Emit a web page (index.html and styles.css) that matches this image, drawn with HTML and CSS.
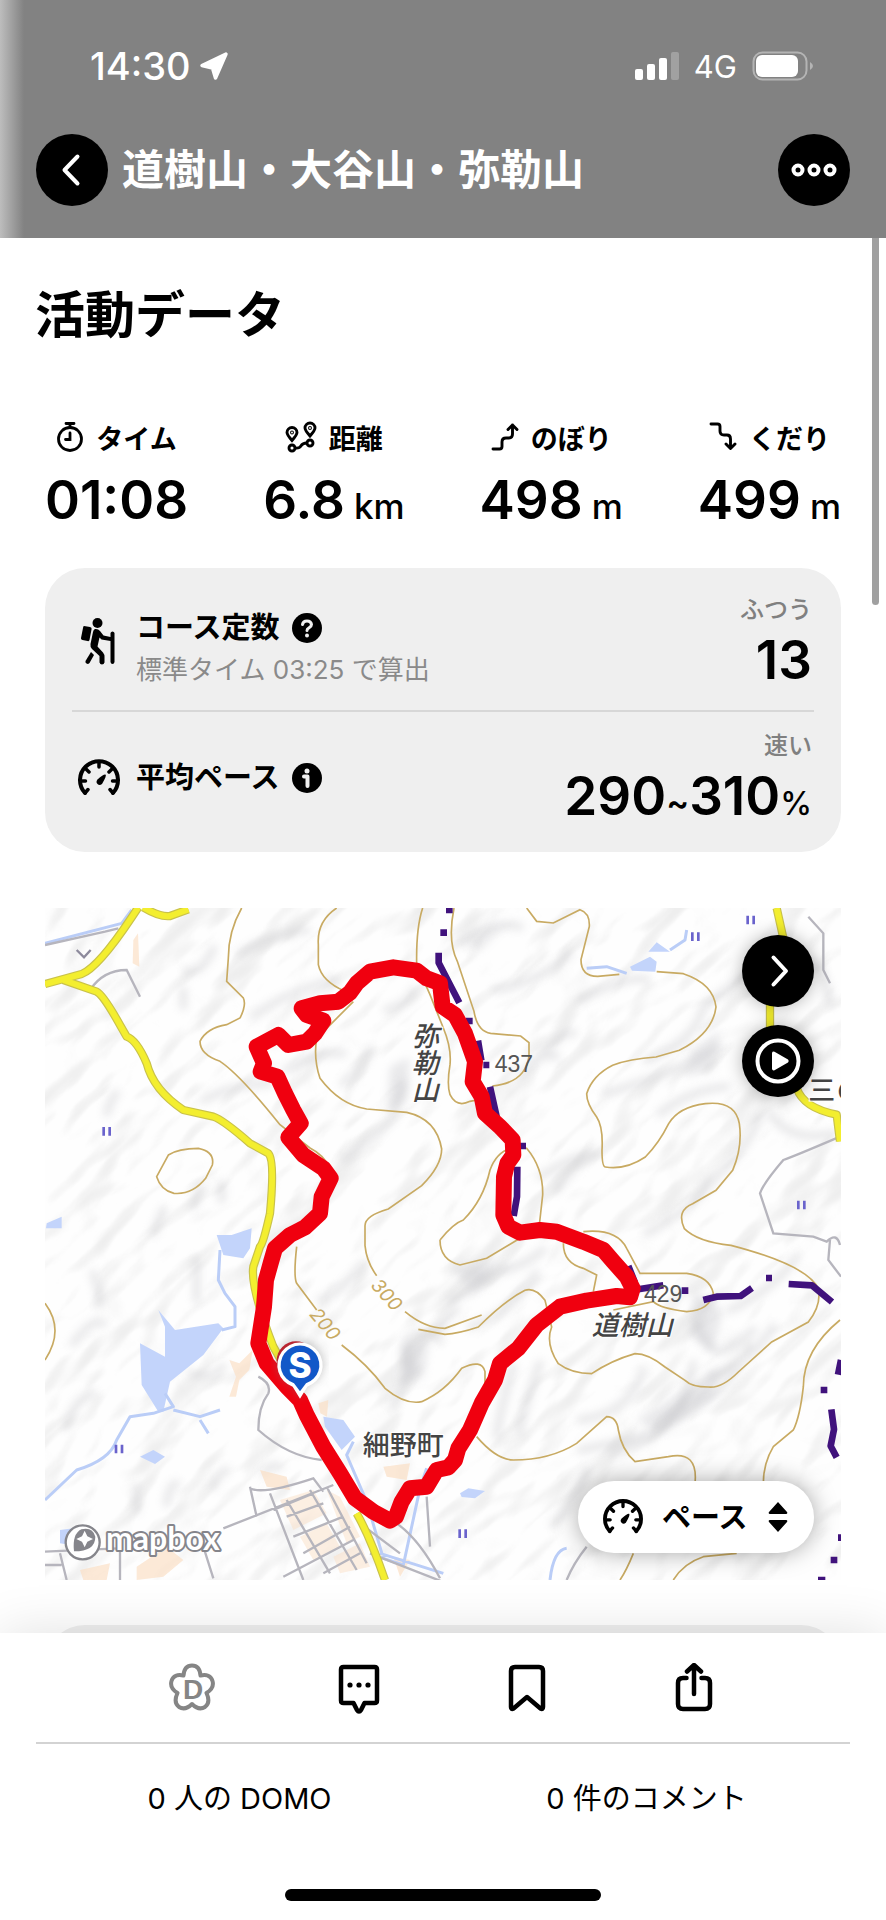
FILE: index.html
```html
<!DOCTYPE html>
<html lang="ja">
<head>
    <meta charset="UTF-8">
    <meta name="viewport" content="width=device-width, initial-scale=1.0">
    <title>道樹山・大谷山・弥勒山</title>
    <link rel="stylesheet" href="styles.css">
</head>
<body>
    <header class="header">
        <div class="status">
            <span class="status-time">14:30</span>
            <svg class="status-arrow" width="30" height="30" viewBox="0 0 30 30"><path d="M27 3 3 14.500 13.500 17 16.500 27z" fill="#fff" stroke="#fff" stroke-width="3.500" stroke-linejoin="round"/></svg>
            <div class="status-right">
                <svg width="44" height="28" viewBox="0 0 44 28" fill="#fff"><rect y="17" width="8" height="11" rx="2"/><rect x="12" y="12" width="8" height="16" rx="2"/><rect x="24" y="6" width="8" height="22" rx="2"/><rect x="36" width="8" height="28" rx="2" opacity=".25"/></svg>
                <span class="status-net">4G</span>
                <svg width="62" height="30" viewBox="0 0 62 30"><rect x="1.500" y="1.500" width="53" height="27" rx="9" fill="none" stroke="#b4b4b4" stroke-width="2"/><rect x="4" y="4" width="42" height="22" rx="6" fill="#fff"/><path d="M58 11q6 4 0 8z" fill="#b4b4b4"/></svg>
            </div>
        </div>
        <div class="nav">
            <button class="round" aria-label="戻る">
                <svg width="72" height="72" viewBox="0 0 72 72"><path d="M41.500 22.500 28.500 36l13 13.500" fill="none" stroke="#fff" stroke-width="4" stroke-linecap="round" stroke-linejoin="round"/></svg>
            </button>
            <h1>道樹山・大谷山・弥勒山</h1>
            <button class="round" aria-label="メニュー">
                <svg width="72" height="72" viewBox="0 0 72 72" fill="none" stroke="#fff" stroke-width="4"><circle cx="20" cy="36" r="4.500"/><circle cx="36" cy="36" r="4.500"/><circle cx="52" cy="36" r="4.500"/></svg>
            </button>
        </div>
    </header>

    <main class="content">
        <h2>活動データ</h2>

        <div class="stats">
            <div class="stat">
                <div class="stat-label">
                    <svg width="28" height="32" viewBox="0 0 28 32" fill="none" stroke="#000" stroke-width="2.800" stroke-linecap="round"><circle cx="14" cy="18" r="11.500"/><path d="M14 12v6.500H9.500M10 2.500h8M14 3v3"/></svg>
                    タイム
                </div>
                <div class="stat-value">01:08</div>
            </div>
            <div class="stat">
                <div class="stat-label">
                    <svg width="32" height="32" viewBox="0 0 32 32" fill="none" stroke="#000" stroke-width="2.900"><path d="M7 19.500C3.500 15.500 2 13.500 2 11.500a5 5 0 0 1 10 0c0 2-1.500 4-5 8zM25 15c-3.500-4-5-6-5-8a5 5 0 0 1 10 0c0 2-1.500 4-5 8z"/><circle cx="7" cy="27" r="3"/><circle cx="25" cy="22" r="3"/><path d="M10 27c9 1 3-5 12-5"/><circle cx="7" cy="11.500" r=".5"/><circle cx="25" cy="7" r=".5"/></svg>
                    距離
                </div>
                <div class="stat-value">6.8<small>km</small></div>
            </div>
            <div class="stat">
                <div class="stat-label">
                    <svg width="28" height="30" viewBox="0 0 28 30" fill="none" stroke="#000" stroke-width="2.900" stroke-linecap="round" stroke-linejoin="round"><path d="M2 27h6.500q2.500 0 2.500-2.500V20q0-4 4-4h3q3.500 0 3.500-4V3M17 7.500 21.500 3 26 7.500"/></svg>
                    のぼり
                </div>
                <div class="stat-value">498<small>m</small></div>
            </div>
            <div class="stat">
                <div class="stat-label">
                    <svg width="28" height="30" viewBox="0 0 28 30" fill="none" stroke="#000" stroke-width="2.900" stroke-linecap="round" stroke-linejoin="round"><path d="M2 2h6.500q2.500 0 2.500 2.500V9q0 4 4 4h3q3.500 0 3.500 4v9.500M17 22l4.500 4.500L26 22"/></svg>
                    くだり
                </div>
                <div class="stat-value">499<small>m</small></div>
            </div>
        </div>

        <section class="card">
            <div class="row row-course">
                <svg class="row-icon" width="44" height="48" viewBox="0 0 44 48"><circle cx="20.500" cy="5" r="5"/><path d="m7 8 6 1q2 .3 1.600 2L12.500 22q-.3 1.500-2 1l-5-1q-2-.4-1.500-2L6 10q.2-2 1-2z"/><path d="M18 11q3-.5 5 2l3.500 4.500 7 1.500V15q.5-1.500 2-1.500t2 1.500v29q-.3 2-2 2t-2-2V23l-9-1.500-2-2-2 9 5.500 6q1.500 2 1.500 4v6q-.5 2-2.500 2t-2.500-2v-6.500L15 31q-2-2-1.500-5l2.500-12q.5-2.500 2-3z"/><path d="m14 34 3 3-4.500 8q-1.500 1.500-3 .5t-1-2.500z"/></svg>
                <div class="row-main">
                    <div class="row-title">コース定数
                        <button class="hint" aria-label="ヘルプ"><svg width="30" height="30" viewBox="0 0 30 30"><circle cx="15" cy="15" r="15"/><path d="M10.500 11.500Q11 8 15 8t4.500 3.500c0 3.500-4.500 3-4.500 6" fill="none" stroke="#efefef" stroke-width="3" stroke-linecap="round"/><circle cx="15" cy="22.500" r="2" fill="#efefef"/></svg></button>
                    </div>
                    <div class="row-sub">標準タイム 03:25 で算出</div>
                </div>
                <div class="row-end">
                    <span class="rank">ふつう</span>
                    <span class="figure">13</span>
                </div>
            </div>
            <div class="row row-pace">
                <svg class="row-icon" width="44" height="40" viewBox="0 0 44 40"><use href="#gauge"/></svg>
                <div class="row-main">
                    <div class="row-title">平均ペース
                        <button class="hint" aria-label="情報"><svg width="30" height="30" viewBox="0 0 30 30"><circle cx="15" cy="15" r="15"/><circle cx="15" cy="8" r="2.500" fill="#efefef"/><path d="M12 13.500h3.500V23" fill="none" stroke="#efefef" stroke-width="4" stroke-linecap="round" stroke-linejoin="round"/></svg></button>
                    </div>
                </div>
                <div class="row-end">
                    <span class="rank">速い</span>
                    <span class="figure">290<i>~</i>310<small>%</small></span>
                </div>
            </div>
        </section>

        <section class="map">
            <svg class="map-canvas" viewBox="15 24 2388 2016">
                <defs>
                    <filter id="soft" x="-10%" y="-10%" width="120%" height="120%"><feGaussianBlur stdDeviation="13"/></filter>
                    <filter id="relief" x="0" y="0" width="100%" height="100%" color-interpolation-filters="sRGB">
                        <feTurbulence type="fractalNoise" baseFrequency="0.003 0.006" numOctaves="3" seed="7"/>
                        <feDiffuseLighting surfaceScale="110" diffuseConstant="1.180" lighting-color="#fff"><feDistantLight azimuth="250" elevation="62"/></feDiffuseLighting>
                    </filter>
                    <g id="gauge"><path d="M8 35A19 19 0 1 1 36 35" fill="none" stroke="#000" stroke-width="4" stroke-linecap="round"/><path d="M22 5v4M9 11l3 3M35 11l-3 3M4 23h4.500M40 23h-4.500M8 35l3-3.500M36 35l-3-3.500" fill="none" stroke="#000" stroke-width="3.500" stroke-linecap="round"/><path d="M28.500 16.500q1.500 1-3.500 9.500-2.500 2-4.500 0t0-4.500q6-5.500 8-5z"/></g>
                    <g id="paddy" stroke="#6a63cc" stroke-width="8"><path d="M-9-13v26M9-13v26"/></g>
                </defs>
                <rect x="15" y="24" width="2388" height="2016" fill="#fefefe"/>

                <!-- hill shading -->
                <g transform="rotate(-42 1209 1032)" opacity=".06">
                    <rect x="-500" y="-700" width="3400" height="3400" filter="url(#relief)"/>
                </g>
                <g filter="url(#soft)" fill="none" stroke="#c4c4c8" stroke-width="22" stroke-linecap="round" opacity=".42">
                    <path d="M440 215q50 0 80-70M600 160q100-60 200-70M640 350q90-70 240-110M490 600q100-50 200-50M740 510q100-60 170-50M910 780q100-70 150-130l30-100M910 550q60-50 80-100M1040 330q70-20 80-60M200 640q20-60 30-60M340 1000l30-70M460 920l20-60M545 850v50M430 270v50"/>
                    <path d="M1260 130q100-70 180-50M1370 270q140-30 220-110M1620 300q150-80 200-60M1500 470q80-90 100-70M1440 530q60-80 110-60M1820 480q150-60 170-160l120-90M1700 580q200-60 340-140M1860 640q90-70 200-80M2000 850q100-70 160-200M1500 830q100-60 150-70M1550 870q70-100 120-110M1820 1000q130-70 200-160M2190 640q60 90 190 60M2290 180q60 0 80 130"/>
                    <path d="M1230 1200q100-40 160-100M1290 1280q110-30 200-160M1310 1130q130-20 200-80M1420 1400q-40 130-50 210M1500 1390q-50 130-60 210M1620 1560q150-20 190-150M1620 1650q160-30 240-60l180-120q90-110 90-130M1970 1270q20 60 50 80t120-60M1960 1390q-20 90-50 160M1640 1710q-30 100-100 160M1900 1540q-60 90-180 120M2070 1230q130-60 200-160M2200 1280q-60 100-190 150"/>
                    <path d="M100 1330q60-80 90-60M80 1580q20-80 80-100M160 1120q20 60 20 90M470 1080v120M450 1420q70 20 100-20M840 1200q60-20 130-110M1100 1400v-80q60-40 100 0M1060 1520q40-90 60-120M1180 1310q30-60 70-80M380 1810q10-60 30-60M290 1830v-70M520 1760q10-40 40-50M670 1720q20-30 50-20"/>
                </g>
                <g filter="url(#soft)" fill="#b9b9bf" opacity=".3">
                    <path d="M1050 500l60-30-10 130-60 40zM1960 450l80-60-20 120-90 20zM1280 130l120-60-80 80zM1960 1170l90 60-30 120-70-40zM1790 1560l250-160-20 90-160 110zM1080 1340l90-30-20 120-70 30zM1230 1100l150-20-80 100z"/>
                </g>

                <!-- built-up blocks -->
                <g fill="#fbe0c6" opacity=".7">
                    <path d="M568 1380l30 10 40-40-10 60-30 30-10 50-20 0 20-60zM280 120l14-20 4 100-20-10zM290 2000l90-60 50 40-60 50-80 10zM120 2010l90-20-10 50h-70zM1030 1700l80-10-10 50-60-10zM1060 1970l50 10-30 50zM660 1710l80 20 10 40-70-10zM835 1510l30-10-4 50-20-10z"/>
                    <path d="M720 1800l100-30 40 70-100 50zM860 1770l40 20 60 120-40 20zM780 1910l80-40 40 70-80 40zM880 1970l80-40 30 70-90 20z" opacity=".7"/>
                </g>

                <!-- water -->
                <g fill="#c3d4fb">
                    <path d="M530 1005l45 0 60-20-5 60-20 30-60-10zM300 1330l75 40 0-90-20-50 50 60 130-20 15 15-60 80-100 80-20 90h-15l-50-80zM850 1550l60 10 35 50-40 40-50-70zM300 1670l40-20 35 20-30 22zM20 970l45-20v35H18zM60 1890l40-5-10 50-30-5zM1770 200l60-30 20 15-4 30-70-3zM1825 155l25-28 40 28zM1260 1780l25-15 50 8-30 22-40-4z"/>
                </g>
                <g fill="none" stroke="#bacdf7" stroke-width="9" stroke-linejoin="round">
                    <path d="M15 130l230-60 30-40M540 1050l-5 90 20 40 30 40v60l-40 10M375 1480l25 40-60 20-70 10-40 70q-20 60-120 90L15 1800M400 1530l80 20 60-20M480 1560l25 40M940 1625l-20 40 60 140 50 170 60 20 50-230 20-60M1640 205l60-5 60 20M1890 150l45-30 5-30M1020 1960l190 60M1530 2040q10-90 50-95" />
                </g>

                <!-- minor roads -->
                <g fill="none" stroke="#b6b5bd" stroke-width="7">
                    <path d="M15 135l180-40 40-10M150 270q40-60 110-60l40 80M655 1430q40 20 30 50-30 40-30 110 90 80 190 90M2305 50l45 50 0 110 20 40M2400 710q-140 60-170 70-60 70-70 100l30 90 10 30 120 10 40 15q30-30 40 10M2370 1020l-5 60 38 50M1580 2040q20-50 60-100M1080 1960l-120-90M1160 1790l10 150 M1070 1870q70 50 130 165"/>
                    <path d="M15 1955l220-10M240 1955v85M60 1960l20 80M15 1995h50M490 1940l30 95M550 1885l330-130M630 1765q40 20 190-30l30 40M630 1760l20 90M690 1780l100 260M700 1830l120-50M740 1850l110-40M760 1910l150-60M790 1960l140-80M730 2030l210-110M850 2020l110-60M740 1800l130 220M810 1770l140 240M860 1760l120 230M990 1960l230 90"/>
                </g>
                <path d="M110 150l22 22 20-22" fill="none" stroke="#8d8a9c" stroke-width="7"/>

                <!-- contours -->
                <g fill="none" stroke="#c8aa62" stroke-width="5">
                    <path d="M605 24q-40 70-40 150l-5 70 50 50q10 20-10 60l-40 20q-60 10-80 50 0 40 60 60 60 40 180 190l90 70q40 20 60 60"/>
                    <path d="M890 24q-60 40-55 110v60q10 50 80 80M940 305l-110 110q-10 60 10 120 60 80 140 92l120 10q90 20 105 110 0 50-60 110l-100 70q-70 20-70 50v60q5 50 35 90"/>
                    <path d="M1148 24q-20 60-18 170l40 90 40 100q25 60 20 110-10 60 0 90 20 40 60 20l50-10M1242 24q-20 100 10 160l50 150q10 60 50 66l90 8 25 20v40q-10 80-110 90"/>
                    <path d="M350 830l35-65q30-20 90-20 50 10 42 50l-20 40q-40 50-95 45-40-10-52-50zM15 1210q60 80 0 170"/>
                    <path d="M1460 24l30 40 50 5 80-40q30 10 28 50l-25 100q0 50 50 50l65-6M1850 215l80 6q90 30 98 100-10 80-110 130l-70 20q-80 5-130 25-60 30-78 85 0 30 30 70 20 30 16 100 0 50 10 50 60 10 120-30 40-40 70-100 30-50 110-60 90-10 102 60 10 70-20 140l-50 60-70 40q-50 20-25 75 40 40 140 50 230 60 262 130 10 50-30 100l-110 60-100 90q-50 50-90 45-50 0-70-20l-60-40q-50-40-90-40-70 20-130 60-60 0-100-30-40-60-20-110l-20-80q-30-40-60-30-60 30-140 110-60 20-100 22l-80-15"/>
                    <path d="M770 1040q-10 90 0 110l60 80M905 1335q80 60 130 130 60 50 110 40 70-30 120-100 60-30 70 10v60M1095 1235q60 50 120 50l110-40"/>
                    <path d="M1200 1020q0 60 60 75l80-20 100-60M1200 1020q40-50 70-60 60-60 80-150 30-80 110-65 50 60 48 140l-10 90M1630 995q100-10 130 50l40 75 140 0q70 10 80 60-10 50-80 55-80-10-100-30l-120 25M1570 1030q0 60 60 75l40 20-10 50M1310 1610q60 70 110 70 110 0 190-50l90-80q30 0 35 40 10 60 50 95l100-15q90-20 80 80M1780 1960q-20 50-40 80M2090 1960l-100 10q-60 20-90 70M2400 1260q-110 90-110 200-10 90-30 130l-60 50q-30 50-30 110"/>
                </g>

                <!-- main roads -->
                <g fill="none" stroke-linecap="butt" stroke-linejoin="round">
                    <g stroke="#c9c24a" stroke-width="25">
                        <path d="M15 252l110-30q50-20 150-170l20-30M310 22q50 30 80 26l55-20M70 240l100 35q20 10 70 100l20 35q30 10 60 80 20 80 110 140l90 20q30 10 110 80l55 30q20 20 5 180-20 90-30 100l-20 60q-10 60 60 240l90 160M950 1840q40 70 85 200M2210 24l20 90-40 90v200l80 160q20 60 120 80l10 80"/>
                    </g>
                    <g stroke="#f3ee2f" stroke-width="18">
                        <path d="M15 252l110-30q50-20 150-170l20-30M310 22q50 30 80 26l55-20M70 240l100 35q20 10 70 100l20 35q30 10 60 80 20 80 110 140l90 20q30 10 110 80l55 30q20 20 5 180-20 90-30 100l-20 60q-10 60 60 240l90 160M950 1840q40 70 85 200M2210 24l20 90-40 90v200l80 160q20 60 120 80l10 80"/>
                    </g>
                </g>

                <!-- prefecture border -->
                <g fill="none" stroke="#40127c" stroke-width="20" stroke-linejoin="round">
                    <path d="M1218 30h20M1201 98h20M1196 158v30l62 120M1278 363h20M1314 422l10 60M1330 495h18M1350 560l20 90M1440 738h18M1432 800l-1 90-10 58M1765 1098l20 50M1795 1168l75-12M1925 1172h20M1990 1200l40-10 72-2 34-24M2178 1134h18M2246 1152l70 4 60 50M2403 1380l-9 44M2342 1470h20M2374 1528l8 60-10 50 18 34M2372 1980h20M2394 1913h9M2334 2040h22"/>
                </g>

                <g class="map-names">
                    <text class="vertical" x="1150" y="368">弥勒山</text>
                    <text x="1655" y="1305">道樹山</text>
                    <text class="upright" x="968" y="1665">細野町</text>
                    <text class="upright" x="2305" y="600">三</text>
                    <text class="upright" x="2390" y="600">の</text>
                </g>
                <g class="map-heights">
                    <text x="1364" y="515">437</text>
                    <text x="1812" y="1206">429</text>
                </g>
                <g class="map-contours">
                    <text transform="translate(990 1158) rotate(48)">300</text>
                    <text transform="translate(806 1244) rotate(50)">200</text>
                </g>
                <use href="#paddy" x="200" y="694"/>
                <use href="#paddy" x="237" y="1647"/>
                <use href="#paddy" x="1966" y="110"/>
                <use href="#paddy" x="2132" y="60"/>
                <use href="#paddy" x="2284" y="915"/>
                <use href="#paddy" x="1268" y="1901"/>

                <!-- walked route -->
                <path d="M780 1500L800 1545 850 1640 900 1720 945 1795 1000 1835 1050 1862 1068 1850 1085 1805 1110 1765 1160 1760 1190 1710 1225 1702 1245 1680 1255 1645 1290 1590 1325 1510 1365 1440 1380 1390 1435 1345 1490 1275 1560 1220 1640 1202 1730 1188 1770 1192 1778 1165 1760 1130 1720 1085 1690 1050 1630 1025 1550 995 1500 990 1440 998 1405 980 1390 945 1392 830 1402 790 1420 765 1418 720 1380 680 1335 640 1325 590 1298 545 1305 485 1275 400 1245 345 1208 320 1200 250 1160 235 1130 212 1060 202 990 215 950 250 930 278 895 305 840 310 785 325 800 345 850 362 825 400 800 425 745 435 715 405 650 440 672 490 662 515 712 530 735 580 760 630 782 670 745 712 790 765 850 805 872 835 845 890 840 940 795 982 750 1005 705 1045 692 1090 678 1140 672 1220 655 1330 680 1390 740 1460 780 1500" fill="none" stroke="#f0000f" stroke-width="48" stroke-linejoin="round" stroke-linecap="round"/>

                <!-- start pin -->
                <circle cx="768" cy="1382" r="58" fill="#c8101e"/>
                <g>
                    <path d="M780 1497l-24-38a72 72 0 1 1 48 0z" fill="#777" opacity=".35" filter="url(#soft)"/>
                    <path d="M780 1496l-22-36a68 68 0 1 1 44 0z" fill="#fff"/>
                    <path d="M780 1474l-18-24a58 58 0 1 1 36 0z" fill="#1258c8"/>
                    <text class="pin" x="780" y="1434" text-anchor="middle">S</text>
                </g>

                <!-- provider mark -->
                <circle cx="128" cy="1927" r="51" fill="#fff" stroke="#85858b" stroke-width="7"/>
                <path d="M102 1954q-6-52 22-66 34-8 42 22 0 44-64 44z" fill="#85858b"/>
                <path d="M134 1892l8 17 17 8-17 8-8 17-8-17-17-8 17-8z" fill="#fff"/>
                <text class="provider" x="198" y="1951">mapbox</text>
            </svg>

            <div class="map-buttons">
                <button class="round" aria-label="地図を開く">
                    <svg width="72" height="72" viewBox="0 0 72 72"><path d="M31.500 22.500 44 36 31.500 49.500" fill="none" stroke="#fff" stroke-width="4" stroke-linecap="round" stroke-linejoin="round"/></svg>
                </button>
                <button class="round" aria-label="再生">
                    <svg width="72" height="72" viewBox="0 0 72 72"><circle cx="36" cy="36" r="20.500" fill="none" stroke="#fff" stroke-width="4"/><path d="M30 28v16q.5 2 2.500 1.200L46 37.500q1.500-1.500 0-3L32.500 26.800q-2-.8-2.500 1.200z" fill="#fff"/></svg>
                </button>
            </div>

            <label class="pace">
                <svg width="42" height="38" viewBox="0 0 44 40"><use href="#gauge"/></svg>
                <select aria-label="表示"><option>ペース</option></select>
                <svg width="20" height="32" viewBox="0 0 20 32"><path d="M10 1 19 11q1 2-1 2H2q-2 0-1-2zM10 31 1 21q-1-2 1-2h16q2 0 1 2z"/></svg>
            </label>
        </section>

        <section class="card next"></section>
        <div class="scrollbar"></div>
    </main>

    <footer class="footer">
        <div class="actions">
            <button aria-label="DOMO"><svg width="48" height="52" viewBox="0 0 48 52"><path d="M15.500 12.500C16 5.500 19 2.500 24 2.500s8 3 8.500 10c6-1.500 10.500.5 12 5.500 1.500 5-.5 8.500-6 12 3 6.500 2.500 11-1.500 14-4 2.500-8.500 1.500-13-3-4.500 4.500-9 5.500-13 3-4-3-4.500-7.500-1.500-14-5.500-3.500-7.500-7-6-12s6-7 12-5.500z" fill="none" stroke="#858585" stroke-width="4" stroke-linejoin="round"/><text class="domo" x="25" y="36" text-anchor="middle">D</text></svg></button>
            <button aria-label="コメント"><svg width="48" height="52" viewBox="0 0 48 52"><path d="M8.500 4h31q2.500 0 2.500 2.500v31q0 2.500-2.500 2.500H29.500L26 47q-2 3-4 0l-3.500-7h-10Q6 40 6 37.500v-31Q6 4 8.500 4z" fill="none" stroke="#000" stroke-width="4.500" stroke-linejoin="round"/><circle cx="15" cy="22" r="2.600"/><circle cx="24" cy="22" r="2.600"/><circle cx="33" cy="22" r="2.600"/></svg></button>
            <button aria-label="ブックマーク"><svg width="48" height="52" viewBox="0 0 48 52"><path d="M12 4h24q4 0 4 4v36q0 3-2.500 1.500L24 34 10.500 45.500Q8 47 8 44V8q0-4 4-4z" fill="none" stroke="#000" stroke-width="4.500" stroke-linejoin="round"/></svg></button>
            <button aria-label="共有"><svg width="48" height="52" viewBox="0 0 48 52" fill="none" stroke="#000" stroke-width="4.500" stroke-linecap="round" stroke-linejoin="round"><path d="M16.500 15H13q-5 0-5 5v21q0 5 5 5h22q5 0 5-5V20q0-5-5-5h-3.500M24 31V3M17 8.500 24 2l7 6.500"/></svg></button>
        </div>
        <div class="counts">
            <a href="#domo">0 人の DOMO</a>
            <a href="#comments">0 件のコメント</a>
        </div>
        <div class="home"></div>
    </footer>
</body>
</html>
```
FILE: styles.css
```css
* {
    box-sizing: border-box;
}
body {
    margin: 0;
    height: 100vh;
    display: flex;
    flex-direction: column;
    overflow: hidden;
    background-color: #fff;
    color: #000;
    font-family: Inter, "Noto Sans CJK JP", sans-serif;
}
button {
    padding: 0;
    border: none;
    background: none;
    cursor: pointer;
}
svg {
    display: block;
    flex: none;
}
h1, h2 {
    margin: 0;
}

.header {
    padding: 40px 36px 32px;
    color: #fff;
    background: linear-gradient(to right, #bdbdbd, #828282 24px);
}
.status {
    display: flex;
    align-items: center;
    height: 52px;
    padding: 0 36px 0 54px;
    gap: 8px;
}
.status-time {
    font-size: 38px;
    font-weight: 500;
}
.status-right {
    display: flex;
    align-items: center;
    gap: 15px;
    margin-left: auto;
}
.status-net {
    font-size: 31px;
    font-weight: 400;
}
.nav {
    display: flex;
    align-items: center;
    gap: 14px;
    margin-top: 42px;
}
.nav h1 {
    flex: 1;
    font-size: 42px;
    line-height: 60px;
    font-weight: 600;
}
.round {
    flex: none;
    width: 72px;
    height: 72px;
    border-radius: 50%;
    background-color: #000;
}

.content {
    position: relative;
    flex: 1;
    min-height: 0;
    overflow: hidden;
    padding: 47px 45px 0;
}
.content h2 {
    margin-left: -10px;
    font-size: 50px;
    line-height: 60px;
    font-weight: 700;
}
.stats {
    display: flex;
    justify-content: space-between;
    margin-top: 74px;
}
.stat {
    display: flex;
    flex-direction: column;
    align-items: center;
    gap: 15px;
}
.stat-label {
    display: flex;
    align-items: center;
    gap: 12px;
    height: 36px;
    font-size: 27px;
    font-weight: 600;
}
.stat-value {
    height: 60px;
    font-size: 53px;
    line-height: 60px;
    font-weight: 600;
}
.stat-value small {
    margin-left: 9px;
    font-size: 35px;
    font-weight: 500;
}

.card {
    margin-top: 38px;
    padding: 0 27px;
    border-radius: 40px;
    background-color: #efefef;
}
.row {
    display: flex;
    align-items: center;
    height: 142px;
    padding: 0 2px 0 5px;
}
.row-course {
    padding-top: 6px;
}
.row-course .row-main {
    padding-top: 14px;
}
.row-pace {
    padding-bottom: 8px;
    border-top: 2px solid #d7d7d7;
}
.row-icon {
    margin-right: 15px;
}
.row-main {
    flex: 1;
}
.row-title {
    display: flex;
    align-items: center;
    gap: 12px;
    font-size: 29px;
    line-height: 42px;
    font-weight: 600;
}
.row-sub {
    font-size: 26px;
    line-height: 42px;
    color: #8a8a8a;
}
.row-end {
    display: flex;
    flex-direction: column;
    align-items: flex-end;
}
.rank {
    font-size: 24px;
    line-height: 36px;
    font-weight: 500;
    color: #808080;
}
.figure {
    height: 64px;
    font-size: 53px;
    line-height: 64px;
    font-weight: 600;
}
.figure i {
    font-size: 34px;
    font-style: normal;
}
.figure small {
    font-size: 32px;
    font-weight: 500;
}

.map {
    position: relative;
    margin-top: 56px;
}
.map-canvas {
    width: 100%;
    height: auto;
}
.map-names {
    font-size: 81px;
    font-style: italic;
    font-weight: 500;
    fill: #444;
    stroke: #fff;
    stroke-width: 6px;
    paint-order: stroke;
}
.map-names .upright {
    font-style: normal;
}
.map-names .vertical {
    writing-mode: vertical-rl;
}
.map-heights {
    font-family: "Liberation Sans", sans-serif;
    font-size: 69px;
    fill: #555;
}
.map-contours {
    font-size: 57px;
    font-style: italic;
    fill: #c8aa62;
}
.pin {
    font-size: 105px;
    font-weight: 800;
    fill: #fff;
}
.provider {
    font-family: Lato, sans-serif;
    font-size: 96px;
    font-weight: 700;
    fill: #fff;
    stroke: #85858b;
    stroke-width: 12px;
    paint-order: stroke;
    stroke-linejoin: round;
}
.map-buttons {
    position: absolute;
    top: 27px;
    right: 27px;
    display: flex;
    flex-direction: column;
    gap: 18px;
}
.map-buttons .round {
    box-shadow: 0 0 18px rgba(0, 0, 0, 0.3);
}
.pace {
    position: absolute;
    right: 27px;
    bottom: 27px;
    display: flex;
    align-items: center;
    gap: 18px;
    height: 72px;
    padding: 0 26px 0 24px;
    border-radius: 36px;
    background-color: #fff;
    box-shadow: 0 0 24px rgba(0, 0, 0, 0.35);
}
.pace select {
    appearance: none;
    padding: 0;
    border: none;
    background: none;
    color: #000;
    font-family: inherit;
    font-size: 29px;
    font-weight: 600;
}
.next {
    height: 200px;
    margin-top: 45px;
}
.scrollbar {
    position: absolute;
    top: 0;
    right: 7px;
    width: 7px;
    height: 367px;
    border-radius: 0 0 4px 4px;
    background-color: #a0a0a0;
}

.footer {
    position: relative;
    padding: 0 36px 19px;
    background-color: #fff;
    box-shadow: 0 0 50px rgba(0, 0, 0, 0.12);
}
.actions {
    display: grid;
    grid-template-columns: repeat(4, 1fr);
    height: 111px;
    padding: 2px 72px 0;
    border-bottom: 2px solid #d3d3d3;
}
.actions button {
    display: flex;
    align-items: center;
    justify-content: center;
}
.domo {
    font-size: 28px;
    font-weight: 800;
    fill: #858585;
}
.counts {
    display: grid;
    grid-template-columns: repeat(2, 1fr);
    height: 103px;
    align-items: center;
    text-align: center;
}
.counts a {
    font-size: 29px;
    color: #000;
    text-decoration: none;
}
.home {
    width: 316px;
    height: 12px;
    margin: 42px auto 0;
    border-radius: 6px;
    background-color: #000;
}
```
